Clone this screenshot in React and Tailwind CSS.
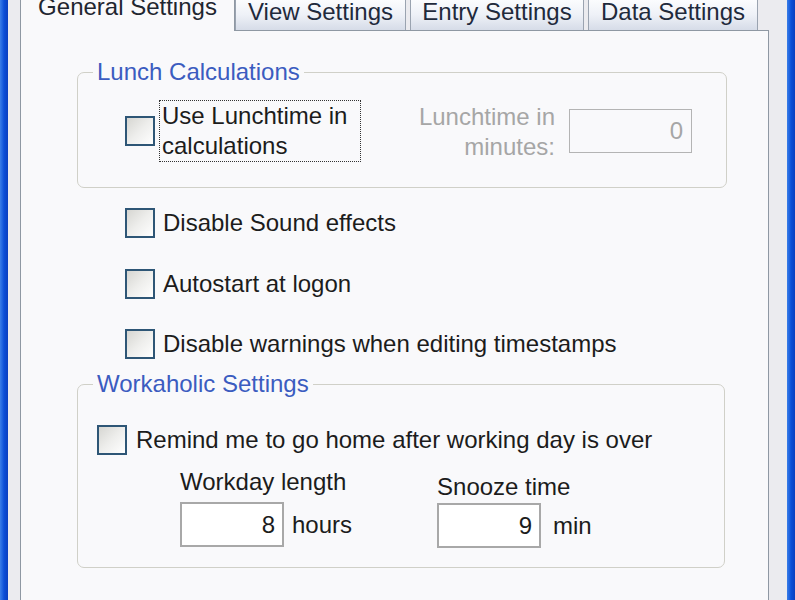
import React from 'react';

const font = { fontFamily: '"Liberation Sans", Arial, sans-serif' };

export default function App() {
  return (
    <div style={font} className="w-[795px] h-[600px] overflow-hidden flex bg-[#ebebef] text-[24px] text-[#1c1c1c]">
      <div className="w-[8px] shrink-0 bg-gradient-to-r from-[#3a7ee8] via-[#0b4fd8] to-[#0a3fbf]" />

      <div className="flex-1 flex flex-col pl-[12px] pr-[18px]">
        <div className="flex items-end h-[30px] shrink-0">
          <Tab label="General Settings" active className="w-[215px]" />
          <Tab label="View Settings" className="w-[171px]" />
          <Tab label="Entry Settings" className="w-[174px] ml-[4px]" />
          <Tab label="Data Settings" className="w-[170px] ml-[4px]" />
        </div>

        <div className="flex-1 bg-[#f9f9fb] border-l border-t border-r border-[#8f98a3] pl-[56px] pr-[41px] pt-[27px]">
          <fieldset className="border border-[#d0d0c8] rounded-[7px] pt-[14px] pb-[25px]">
            <legend className="ml-[15px] px-[4px] leading-[28px] text-[#3b5cc0]">Lunch Calculations</legend>
            <div className="flex items-center">
              <div className="ml-[47px]"><CheckBox /></div>
              <div className="ml-[4px] px-[2px] leading-[30px] border border-dotted border-[#333] w-[202px]">
                Use Lunchtime in<br />calculations
              </div>
              <div className="ml-auto mr-[34px] flex items-center">
                <div className="text-right leading-[30px] text-[#a6a6a6] pt-[1px]">
                  Lunchtime in<br />minutes:
                </div>
                <div className="ml-[14px] w-[123px] h-[44px] border border-[#b4b4b4] flex items-center justify-end pr-[8px] text-[#a6a6a6]">
                  0
                </div>
              </div>
            </div>
          </fieldset>

          <div className="pl-[48px] pt-[20px] flex flex-col">
            <CheckRow label="Disable Sound effects" />
            <div className="mt-[31px]"><CheckRow label="Autostart at logon" /></div>
            <div className="mt-[30px]"><CheckRow label="Disable warnings when editing timestamps" /></div>
          </div>

          <fieldset className="mt-[11px] border border-[#d0d0c8] rounded-[7px] pt-[27px] pb-[19px] w-[648px]">
            <legend className="ml-[15px] px-[4px] leading-[28px] text-[#3b5cc0]">Workaholic Settings</legend>
            <div className="pl-[19px]">
              <CheckRow label="Remind me to go home after working day is over" gap="ml-[9px]" />
            </div>
            <div className="flex pl-[102px] mt-[13px]">
              <div>
                <div className="leading-[28px]">Workday length</div>
                <div className="flex items-center mt-[6px]">
                  <NumBox value="8" />
                  <span className="ml-[8px]">hours</span>
                </div>
              </div>
              <div className="ml-[85px] pt-[5px]">
                <div className="leading-[28px]">Snooze time</div>
                <div className="flex items-center mt-[2px]">
                  <NumBox value="9" />
                  <span className="ml-[12px]">min</span>
                </div>
              </div>
            </div>
          </fieldset>
        </div>
      </div>

      <div className="w-[8px] shrink-0 bg-gradient-to-r from-[#3a7ee8] via-[#0b4fd8] to-[#0a3fbf]" />
    </div>
  );
}

function Tab({ label, active, className = '' }) {
  if (active) {
    return (
      <div className={`relative z-10 -mb-[1px] h-[31px] bg-[#f9f9fb] border-l border-r border-[#8f98a3] flex justify-center ${className}`}>
        <span className="leading-[24px] -mt-[5px] text-[#1f2630]">{label}</span>
      </div>
    );
  }
  return (
    <div className={`h-[30px] bg-gradient-to-b from-[#fbfcfe] via-[#eef1f7] to-[#d6dce8] border-l border-r border-[#9aa3b0] flex justify-center ${className}`}>
      <span className="leading-[24px] text-[#1f2a3c]">{label}</span>
    </div>
  );
}

function CheckBox() {
  return (
    <div className="w-[30px] h-[30px] border-2 border-[#2e5676] bg-gradient-to-br from-[#d6d6d2] via-[#eeeeec] to-white" />
  );
}

function CheckRow({ label, gap = 'ml-[8px]' }) {
  return (
    <div className="flex items-center h-[30px]">
      <CheckBox />
      <span className={`${gap} leading-[30px]`}>{label}</span>
    </div>
  );
}

function NumBox({ value }) {
  return (
    <div className="w-[104px] h-[45px] bg-white border-2 border-[#a8a8a8] flex items-center justify-end pr-[7px]">
      {value}
    </div>
  );
}
